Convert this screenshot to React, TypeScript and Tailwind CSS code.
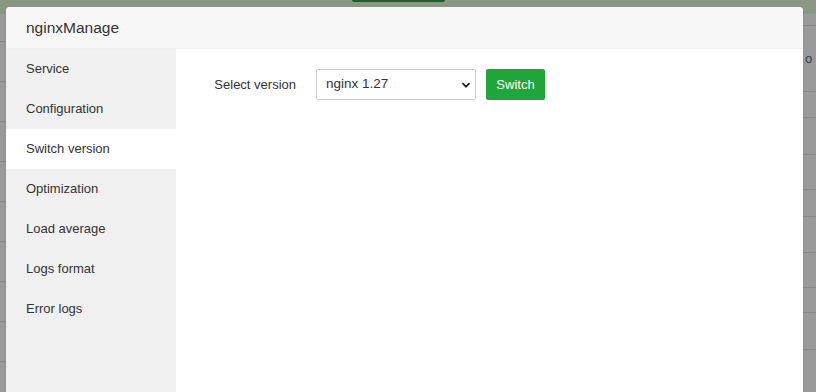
import React, { useState } from 'react';

const menu = [
  'Service',
  'Configuration',
  'Switch version',
  'Optimization',
  'Load average',
  'Logs format',
  'Error logs',
];

export default function App() {
  const [active, setActive] = useState('Switch version');
  const [version, setVersion] = useState('nginx 1.27');

  return (
    <div
      className="relative w-[816px] h-[392px] overflow-hidden bg-[#9a9a9a] text-[#333]"
      style={{ fontFamily: '"Liberation Sans", Arial, sans-serif' }}
    >
      {/* backdrop: dimmed page behind the dialog */}
      <div className="absolute inset-x-0 top-0 h-[14px] bg-[#8a9782]" />
      <div className="absolute left-[352px] top-0 w-[93px] h-[2px] rounded-b bg-[#1d5e2a]" />
      <div className="absolute right-0 top-0 w-[13px] h-full flex flex-col">
        <div className="h-[26px] border-b border-[#888]" />
        <div className="h-[66px] border-b border-[#888] pl-[2px] pt-[26px] text-[13px] leading-none text-[#2a3a55]">o</div>
        <div className="h-[26px] border-b border-[#888]" />
        <div className="h-[37px] border-b border-[#888]" />
        <div className="h-[35px] border-b border-[#888]" />
        <div className="h-[27px] border-b border-[#888]" />
        <div className="h-[36px] border-b border-[#888]" />
        <div className="h-[35px] border-b border-[#888]" />
        <div className="h-[25px] border-b border-[#888]" />
        <div className="h-[37px] border-b border-[#888]" />
      </div>
      <div className="absolute left-0 top-0 w-[6px] h-full flex flex-col">
        <div className="h-[42px] border-b border-[#888]" />
        <div className="h-[40px] border-b border-[#888]" />
        <div className="h-[40px] border-b border-[#888]" />
        <div className="h-[40px] border-b border-[#888]" />
        <div className="h-[40px] border-b border-[#888]" />
        <div className="h-[40px] border-b border-[#888]" />
        <div className="h-[40px] border-b border-[#888]" />
        <div className="h-[40px] border-b border-[#888]" />
        <div className="h-[40px] border-b border-[#888]" />
      </div>

      {/* dialog */}
      <div className="absolute left-[6px] top-[7px] w-[797px] h-[392px] rounded-t-[4px] bg-white overflow-hidden flex flex-col shadow">
        <div className="h-[42px] shrink-0 bg-[#f7f7f7] border-b border-[#eee] flex items-center pl-[20px] text-[15.5px]">
          nginxManage
        </div>
        <div className="flex flex-1">
          <div className="w-[170px] bg-[#f0f0f0] flex flex-col">
            {menu.map((m) => (
              <div
                key={m}
                onClick={() => setActive(m)}
                className={`h-[40px] flex items-center pl-[20px] text-[13px] cursor-pointer ${
                  active === m ? 'bg-white' : ''
                }`}
              >
                {m}
              </div>
            ))}
          </div>
          <div className="flex-1 pt-[20px] pl-[20px]">
            <div className="flex items-center">
              <label className="w-[100px] text-right text-[13px] mr-[20px]">Select version</label>
              <div className="relative w-[160px] h-[31px] border border-[#ccc] rounded-[2px] bg-white flex items-center">
                <select
                  value={version}
                  onChange={(e) => setVersion(e.target.value)}
                  className="appearance-none w-full h-full pl-[9px] pr-[24px] text-[13.5px] bg-transparent outline-none"
                >
                  <option>nginx 1.27</option>
                  <option>nginx 1.26</option>
                  <option>nginx 1.24</option>
                </select>
                <svg
                  className="absolute right-[4px] top-1/2 -translate-y-1/2 pointer-events-none"
                  width="10"
                  height="10"
                  viewBox="0 0 10 10"
                >
                  <path d="M1.5 3.2 L5 6.7 L8.5 3.2" fill="none" stroke="#222" strokeWidth="1.8" />
                </svg>
              </div>
              <button className="ml-[10px] w-[59px] h-[31px] rounded-[2px] bg-[#20a53a] text-white text-[13px]">
                Switch
              </button>
            </div>
          </div>
        </div>
      </div>
    </div>
  );
}
